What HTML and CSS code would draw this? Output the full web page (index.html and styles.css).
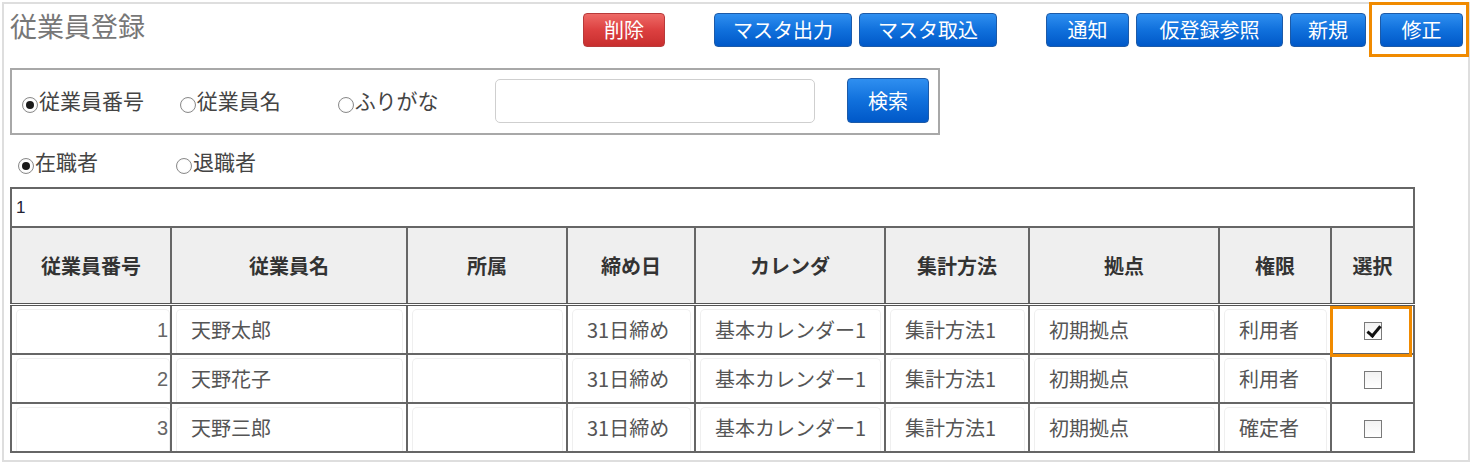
FILE: index.html
```html
<!DOCTYPE html>
<html lang="ja">
<head>
<meta charset="utf-8">
<title>従業員登録</title>
<link rel="stylesheet" href="styles.css">
</head>
<body>
<div class="page">
  <div class="header">
    <h1 class="title">従業員登録</h1>
    <div class="actions">
      <button class="btn btn-red w82">削除</button>
      <button class="btn btn-blue w138 gap-lg">マスタ出力</button>
      <button class="btn btn-blue w138 gap-sm">マスタ取込</button>
      <button class="btn btn-blue w83 gap-lg">通知</button>
      <button class="btn btn-blue w147 gap-sm">仮登録参照</button>
      <button class="btn btn-blue w76 gap-sm">新規</button>
      <div class="highlight-wrap">
        <button class="btn btn-blue w83">修正</button>
        <span class="highlight hl-top"></span>
      </div>
    </div>
  </div>

  <div class="search-box">
    <label class="radio"><input type="radio" name="key" checked>従業員番号</label>
    <label class="radio"><input type="radio" name="key">従業員名</label>
    <label class="radio"><input type="radio" name="key">ふりがな</label>
    <input class="search-input" type="text">
    <button class="btn btn-blue btn-search">検索</button>
  </div>

  <div class="status-row">
    <label class="radio"><input type="radio" name="st" checked>在職者</label>
    <label class="radio"><input type="radio" name="st">退職者</label>
  </div>

  <table class="grid">
    <colgroup>
      <col style="width:160px"><col style="width:236px"><col style="width:160px"><col style="width:128px"><col style="width:190px"><col style="width:144px"><col style="width:190px"><col style="width:112px"><col style="width:83px">
    </colgroup>
    <tr class="caption-row"><td colspan="9">1</td></tr>
    <tr class="head-row">
      <th>従業員番号</th><th>従業員名</th><th>所属</th><th>締め日</th><th>カレンダ</th><th>集計方法</th><th>拠点</th><th>権限</th><th>選択</th>
    </tr>
    <tr class="data-row">
      <td><div class="cell num">1</div></td><td><div class="cell">天野太郎</div></td><td><div class="cell"></div></td><td><div class="cell">31日締め</div></td><td><div class="cell">基本カレンダー1</div></td><td><div class="cell">集計方法1</div></td><td><div class="cell">初期拠点</div></td><td><div class="cell">利用者</div></td>
      <td class="sel"><span class="chk checked"></span><span class="highlight hl-row"></span></td>
    </tr>
    <tr class="data-row">
      <td><div class="cell num">2</div></td><td><div class="cell">天野花子</div></td><td><div class="cell"></div></td><td><div class="cell">31日締め</div></td><td><div class="cell">基本カレンダー1</div></td><td><div class="cell">集計方法1</div></td><td><div class="cell">初期拠点</div></td><td><div class="cell">利用者</div></td>
      <td class="sel"><span class="chk"></span></td>
    </tr>
    <tr class="data-row">
      <td><div class="cell num">3</div></td><td><div class="cell">天野三郎</div></td><td><div class="cell"></div></td><td><div class="cell">31日締め</div></td><td><div class="cell">基本カレンダー1</div></td><td><div class="cell">集計方法1</div></td><td><div class="cell">初期拠点</div></td><td><div class="cell">確定者</div></td>
      <td class="sel"><span class="chk"></span></td>
    </tr>
  </table>
</div>
</body>
</html>
```
FILE: styles.css
```css
* { box-sizing: border-box; }
html, body { margin: 0; padding: 0; background: #fff; }
body {
  font-family: "Noto Sans CJK JP", "Liberation Sans", sans-serif;
  color: #555;
}
.page {
  margin: 2px;
  width: 1468px;
  height: 460px;
  border: 2px solid #dedede;
  padding: 9px 5px 0 6px;
}
.header {
  display: flex;
  align-items: flex-start;
  height: 34px;
}
.title {
  margin: -4px 0 0 0;
  font-size: 27px;
  font-weight: normal;
  color: #777;
  line-height: 34px;
  letter-spacing: 0;
}
.actions {
  display: flex;
  margin-left: auto;
}
.btn {
  height: 34px;
  border-radius: 4px;
  font-family: inherit;
  font-size: 20px;
  color: #fff;
  padding: 0;
  line-height: 30px;
  cursor: pointer;
}
.btn-blue {
  background: linear-gradient(#2f8ff0 0%, #1070dc 50%, #0058c8 100%);
  border: 1px solid #1c5aa8;
}
.btn-red {
  background: linear-gradient(#ee6a66 0%, #dc4040 50%, #c82e2e 100%);
  border: 1px solid #b83a3a;
}
.w82 { width: 82px; }
.w138 { width: 138px; }
.w83 { width: 83px; }
.w147 { width: 147px; }
.w76 { width: 76px; }
.gap-lg { margin-left: 49px; }
.gap-sm { margin-left: 7px; }
.highlight-wrap {
  position: relative;
  margin-left: 14px;
}
.highlight {
  position: absolute;
  border: 3px solid #f08a00;
  pointer-events: none;
}
.hl-top {
  left: -11px;
  top: -11px;
  width: 100px;
  height: 55px;
}
.search-box {
  margin-top: 21px;
  width: 930px;
  height: 67px;
  border: 2px solid #a8a8a8;
  display: flex;
  align-items: center;
  padding: 0 9px 0 10px;
}
.radio {
  display: inline-flex;
  align-items: center;
  width: 158px;
  font-size: 21px;
  color: #444;
  line-height: 26px;
  white-space: nowrap;
}
.radio input {
  appearance: none;
  -webkit-appearance: none;
  flex: none;
  width: 16px;
  height: 16px;
  margin: 10px 1px 0 0;
  border: 1px solid #8a8a8a;
  border-radius: 50%;
  background: radial-gradient(circle, #fff 55%, #e4e4e4 100%);
  position: relative;
}
.radio input:checked::after {
  content: "";
  position: absolute;
  left: 3px;
  top: 3px;
  width: 8px;
  height: 8px;
  border-radius: 50%;
  background: #1a1a1a;
}
.search-box .radio { margin-top: -4px; }
.search-input {
  width: 320px;
  height: 44px;
  border: 1px solid #cfcfcf;
  border-radius: 5px;
  margin: -1px 0 0 0;
}
.btn-search {
  margin-left: 32px;
  width: 82px;
  height: 45px;
  font-size: 20px;
  margin-top: -2px;
}
.status-row {
  height: 52px;
  display: flex;
  align-items: center;
  padding: 0 0 0 8px;
}
.grid {
  border-collapse: collapse;
  table-layout: fixed;
  width: 1403px;
}
.grid td, .grid th {
  border: 2px solid #666;
  padding: 0;
}
.grid .caption-row td {
  height: 39px;
  padding: 0 0 0 4px;
  font-family: "Liberation Sans", sans-serif;
  font-size: 17px;
  color: #223;
  vertical-align: middle;
}
.head-row th {
  height: 77px;
  background: #efefef;
  font-size: 20px;
  font-weight: bold;
  color: #333;
  border-bottom: 3px double #555;
}
.grid .data-row td {
  height: 49px;
  vertical-align: top;
}
.cell {
  margin: 3px 3px 0 4px;
  height: 44px;
  border: 1px solid #efefef;
  border-bottom: none;
  border-radius: 5px 5px 0 0;
  font-size: 20px;
  line-height: 40px;
  padding-left: 14px;
  color: #555;
  white-space: nowrap;
}
.cell.num {
  text-align: right;
  padding: 0 1px 0 0;
  margin-right: 0;
  font-family: "Liberation Sans", sans-serif;
  color: #666;
}
.grid .data-row td.sel {
  position: relative;
  text-align: center;
  vertical-align: middle;
}
.chk {
  display: inline-block;
  width: 18px;
  height: 18px;
  border: 1px solid #7a7a7a;
  background: linear-gradient(#f2f2f2, #fff);
  position: relative;
  margin-top: 8px;
}
.chk.checked::after {
  content: "";
  position: absolute;
  left: 5px;
  top: 0px;
  width: 5px;
  height: 11px;
  border-right: 3px solid #111;
  border-bottom: 3px solid #111;
  transform: rotate(40deg);
}
.hl-row {
  left: -2px;
  top: 0px;
  width: 82px;
  height: 51px;
}
```
